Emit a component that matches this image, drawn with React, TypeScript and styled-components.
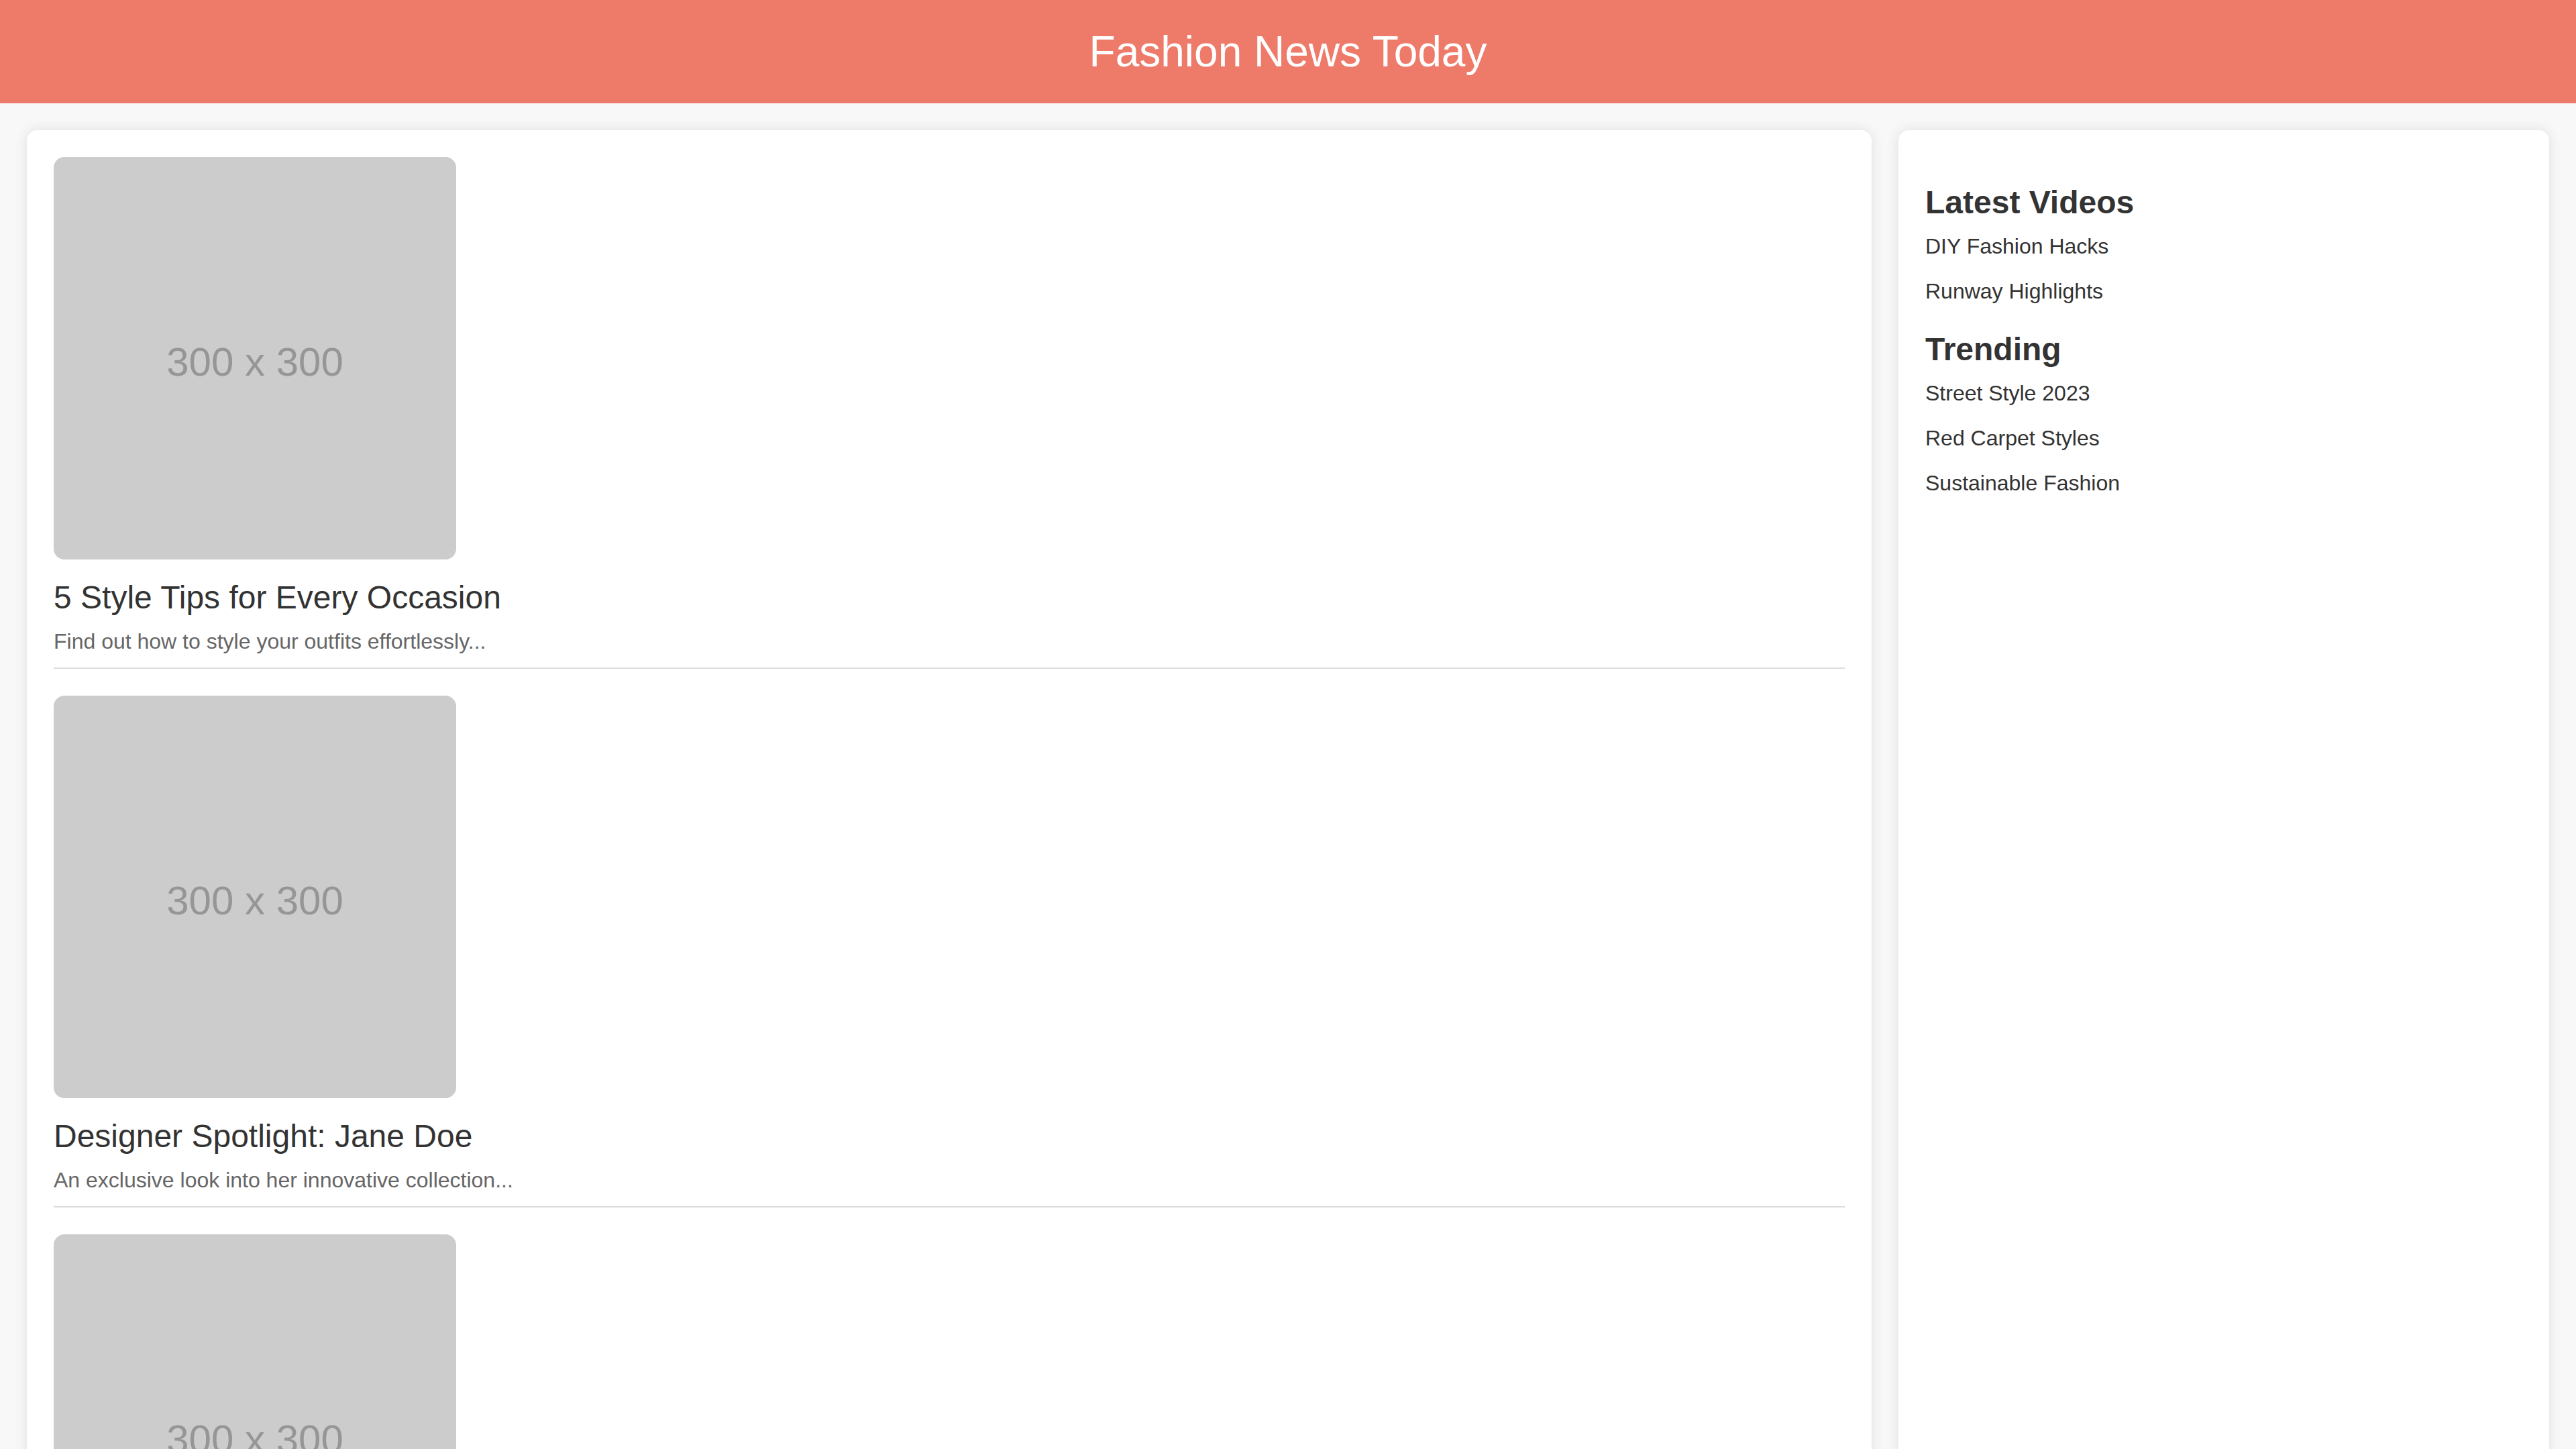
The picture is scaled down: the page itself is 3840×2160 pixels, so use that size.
import React from 'react';
import styled, { createGlobalStyle } from 'styled-components';

const GlobalStyle = createGlobalStyle`
  html, body {
    margin: 0;
    padding: 0;
    background: #f8f8f8;
    font-family: "Liberation Sans", Arial, sans-serif;
    color: #333;
  }
`;

const Header = styled.header`
  background-color: #ee7a6a;
  padding: 40px;
  text-align: center;
`;

const SiteTitle = styled.h1`
  margin: 0;
  font-size: 64px;
  font-weight: 400;
  color: #fff;
`;

const Layout = styled.div`
  display: flex;
  align-items: stretch;
  gap: 40px;
  padding: 40px;
`;

const Card = styled.div<{ $grow: number }>`
  flex: ${(p) => p.$grow};
  min-width: 0;
  background: #fff;
  border-radius: 16px;
  padding: 40px;
  box-shadow: 0 0 20px rgba(0, 0, 0, 0.1);
`;

const Article = styled.article`
  padding-bottom: 20px;
  border-bottom: 2px solid #ddd;
  margin-bottom: 40px;
`;

const Thumb = styled.div`
  width: 600px;
  height: 600px;
  box-sizing: border-box;
  padding-top: 10px;
  border-radius: 16px;
  background: #cccccc;
  color: #969696;
  font-size: 60px;
  display: flex;
  align-items: center;
  justify-content: center;
`;

const ArticleTitle = styled.h2`
  margin: 29px 0 20px;
  font-size: 48px;
  font-weight: 400;
  color: #333;
`;

const Summary = styled.p`
  margin: 0;
  font-size: 32px;
  color: #666;
`;

const SideHeading = styled.h2`
  margin: 40px 0 20px;
  font-size: 48px;
  font-weight: 700;
  color: #333;
`;

const LinkList = styled.ul`
  list-style: none;
  margin: 0;
  padding: 0;
`;

const LinkItem = styled.li`
  font-size: 32px;
  margin-bottom: 30px;
  color: #333;
`;

const articles = [
  { title: '5 Style Tips for Every Occasion', text: 'Find out how to style your outfits effortlessly...' },
  { title: 'Designer Spotlight: Jane Doe', text: 'An exclusive look into her innovative collection...' },
  { title: 'Top Trends This Season', text: 'What everyone will be wearing this fall...' },
];

const sections = [
  { heading: 'Latest Videos', items: ['DIY Fashion Hacks', 'Runway Highlights'] },
  { heading: 'Trending', items: ['Street Style 2023', 'Red Carpet Styles', 'Sustainable Fashion'] },
];

const App: React.FC = () => {
  return (
    <>
      <GlobalStyle />
      <Header>
        <SiteTitle>Fashion News Today</SiteTitle>
      </Header>
      <Layout>
        <Card $grow={3}>
          {articles.map((a) => (
            <Article key={a.title}>
              <Thumb>300 x 300</Thumb>
              <ArticleTitle>{a.title}</ArticleTitle>
              <Summary>{a.text}</Summary>
            </Article>
          ))}
        </Card>
        <Card $grow={1} as="aside">
          {sections.map((s) => (
            <section key={s.heading}>
              <SideHeading>{s.heading}</SideHeading>
              <LinkList>
                {s.items.map((item) => (
                  <LinkItem key={item}>{item}</LinkItem>
                ))}
              </LinkList>
            </section>
          ))}
        </Card>
      </Layout>
    </>
  );
};

export default App;
